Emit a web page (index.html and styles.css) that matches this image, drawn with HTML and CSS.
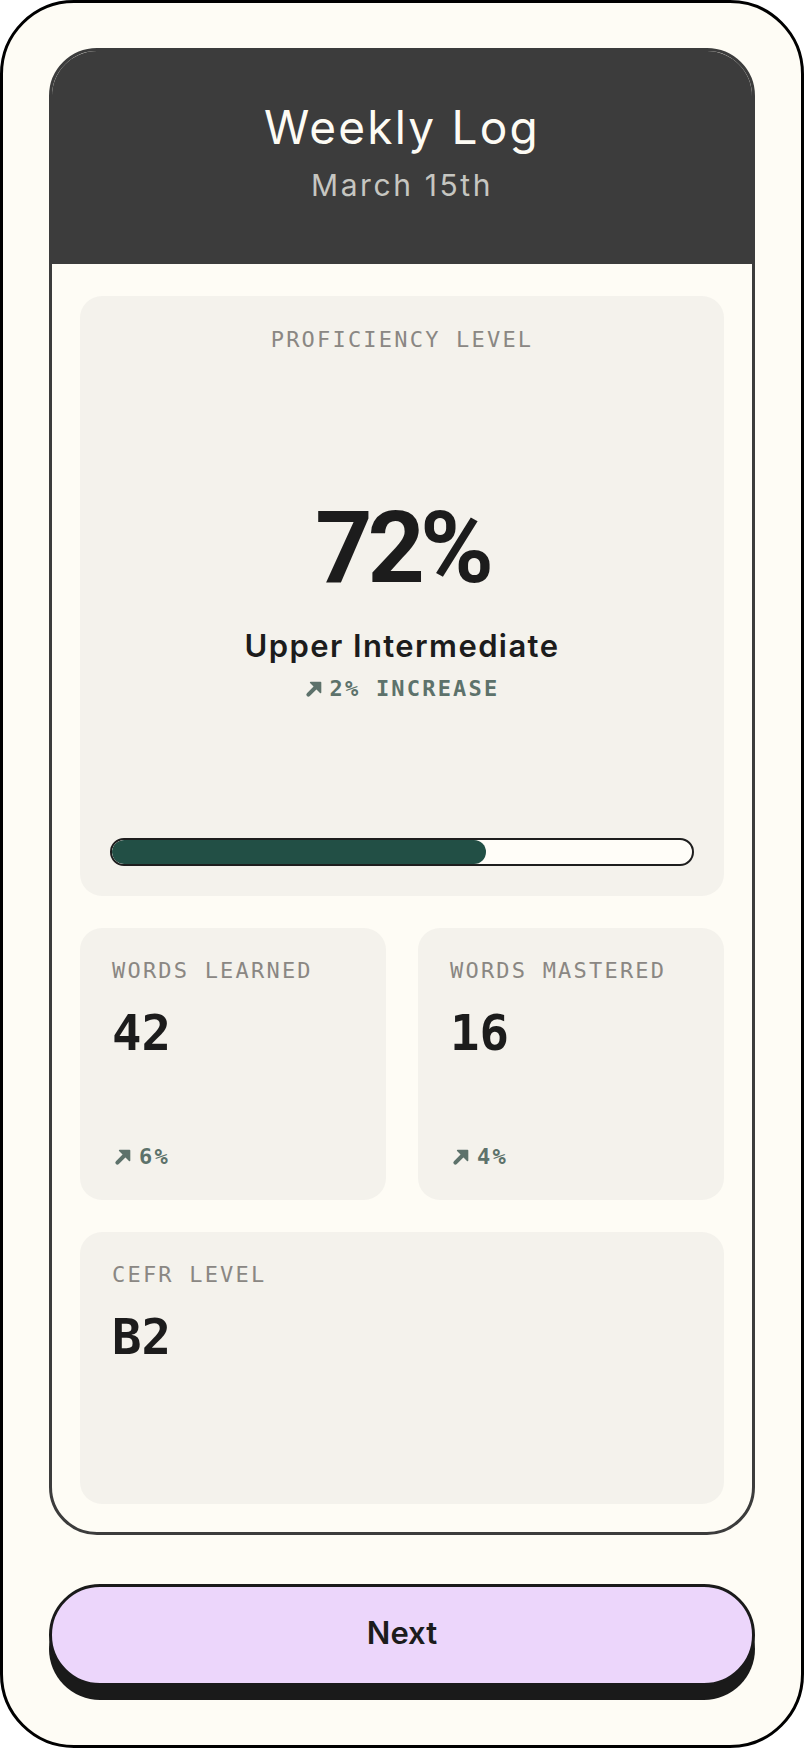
FILE: index.html
```html
<!DOCTYPE html>
<html lang="en">
<head>
<meta charset="utf-8">
<title>Weekly Log</title>
<link rel="stylesheet" href="styles.css">
</head>
<body>
<div class="frame">
  <div class="log-card">
    <header class="log-header">
      <h1 class="log-title">Weekly Log</h1>
      <p class="log-date">March 15th</p>
    </header>
    <div class="log-body">
      <section class="tile tile-hero">
        <div class="tile-label center">PROFICIENCY LEVEL</div>
        <div class="hero-main">
          <div class="hero-value">72%</div>
          <div class="hero-level">Upper Intermediate</div>
          <div class="trend center-trend">
            <svg class="trend-icon" viewBox="0 0 16 16" aria-hidden="true"><path d="M3 13 L10 6" stroke="currentColor" stroke-width="3.6" stroke-linecap="round" fill="none"/><path d="M5 2.2 H13.8 V11 Z" fill="currentColor" stroke="currentColor" stroke-width="1.4" stroke-linejoin="round"/></svg>
            <span>2% INCREASE</span>
          </div>
        </div>
        <div class="progress"><div class="progress-fill" style="width:64.5%"></div></div>
      </section>
      <div class="tile-row">
        <section class="tile tile-small">
          <div class="tile-label">WORDS LEARNED</div>
          <div class="tile-value">42</div>
          <div class="trend bottom-trend">
            <svg class="trend-icon" viewBox="0 0 16 16" aria-hidden="true"><path d="M3 13 L10 6" stroke="currentColor" stroke-width="3.6" stroke-linecap="round" fill="none"/><path d="M5 2.2 H13.8 V11 Z" fill="currentColor" stroke="currentColor" stroke-width="1.4" stroke-linejoin="round"/></svg>
            <span>6%</span>
          </div>
        </section>
        <section class="tile tile-small">
          <div class="tile-label">WORDS MASTERED</div>
          <div class="tile-value">16</div>
          <div class="trend bottom-trend">
            <svg class="trend-icon" viewBox="0 0 16 16" aria-hidden="true"><path d="M3 13 L10 6" stroke="currentColor" stroke-width="3.6" stroke-linecap="round" fill="none"/><path d="M5 2.2 H13.8 V11 Z" fill="currentColor" stroke="currentColor" stroke-width="1.4" stroke-linejoin="round"/></svg>
            <span>4%</span>
          </div>
        </section>
      </div>
      <section class="tile tile-wide">
        <div class="tile-label">CEFR LEVEL</div>
        <div class="tile-value">B2</div>
      </section>
    </div>
  </div>
  <button class="next-btn" type="button">Next</button>
</div>
</body>
</html>
```

FILE: styles.css
```css
* { box-sizing: border-box; }
html, body { margin: 0; padding: 0; background: #ffffff; }
body { font-family: Inter, "Noto Sans", sans-serif; color: #1c1c1c; }

.frame {
  width: 804px;
  height: 1748px;
  border: 3px solid #000000;
  border-radius: 74px;
  background: #fefcf5;
  padding: 45px 46px 0;
  display: flex;
  flex-direction: column;
}

.log-card {
  border: 3px solid #3c3c3c;
  border-radius: 48px;
  overflow: hidden;
  background: #fefcf5;
}

.log-header {
  background: #3c3c3c;
  height: 213px;
  padding-top: 48px;
  text-align: center;
}
.log-title {
  margin: 0;
  font-family: Inter, sans-serif;
  font-weight: 400;
  font-size: 46px;
  line-height: 56px;
  letter-spacing: 2.2px;
  color: #fdfbf4;
}
.log-date {
  margin: 12px 0 0;
  font-family: Inter, sans-serif;
  font-weight: 400;
  font-size: 30px;
  line-height: 36px;
  letter-spacing: 2.6px;
  color: #c6c6c1;
}

.log-body {
  padding: 32px 28px 28px;
  display: flex;
  flex-direction: column;
  gap: 32px;
}

.tile {
  background: #f4f2ec;
  border-radius: 22px;
}

.tile-label {
  font-family: "DejaVu Sans Mono", "Liberation Mono", monospace;
  font-size: 22px;
  line-height: 26px;
  letter-spacing: 2.2px;
  color: #8a8783;
}
.tile-label.center { text-align: center; }

.tile-hero {
  height: 600px;
  padding: 31px 30px 30px;
  display: flex;
  flex-direction: column;
}
.hero-main {
  flex: 1;
  display: flex;
  flex-direction: column;
  align-items: center;
  justify-content: center;
  padding-top: 8px;
}
.hero-value {
  font-family: Roboto, Inter, sans-serif;
  font-weight: 700;
  font-size: 100px;
  line-height: 100px;
  letter-spacing: -5px;
  color: #1c1c1c;
}
.hero-level {
  margin-top: 30px;
  font-family: Inter, sans-serif;
  font-weight: 600;
  font-size: 31px;
  line-height: 36px;
  letter-spacing: 1.4px;
  color: #1c1c1c;
}

.trend {
  display: flex;
  align-items: center;
  gap: 7px;
  font-family: "DejaVu Sans Mono", "Liberation Mono", monospace;
  font-weight: 700;
  font-size: 22px;
  line-height: 26px;
  letter-spacing: 2.2px;
  color: #5d726b;
}
.center-trend { margin-top: 12px; }
.trend-icon { width: 18px; height: 18px; flex: none; }

.progress {
  height: 28px;
  border: 2px solid #1e1e1e;
  border-radius: 14px;
  background: #fffdf8;
  overflow: hidden;
}
.progress-fill {
  height: 100%;
  background: #224f45;
  border-radius: 12px;
}

.tile-row {
  display: grid;
  grid-template-columns: 1fr 1fr;
  gap: 32px;
}
.tile-small {
  height: 272px;
  padding: 30px 32px 30px;
  display: flex;
  flex-direction: column;
}
.tile-value {
  margin-top: 22px;
  font-family: "DejaVu Sans Mono", "Liberation Mono", monospace;
  font-weight: 700;
  font-size: 49px;
  line-height: 56px;
  color: #1c1c1c;
}
.bottom-trend { margin-top: auto; padding-left: 2px; }

.tile-wide {
  height: 272px;
  padding: 30px 32px;
}

.next-btn {
  margin-top: 49px;
  height: 102px;
  width: 100%;
  padding: 0 0 6px;
  border: 3px solid #1a1a1a;
  border-radius: 51px;
  background: #ecd6fb;
  box-shadow: 0 14px 0 #1a1a1a;
  font-family: Inter, sans-serif;
  font-weight: 600;
  font-size: 31px;
  color: #1c1c1c;
  cursor: pointer;
}
```
